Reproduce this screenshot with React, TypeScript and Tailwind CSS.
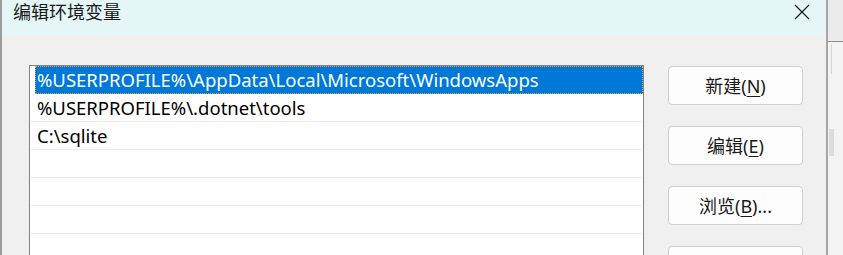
import React from 'react';

const FONT = "font-['Noto_Sans','Noto_Sans_CJK_SC',sans-serif]";

const PATHS = [
  '%USERPROFILE%\\AppData\\Local\\Microsoft\\WindowsApps',
  '%USERPROFILE%\\.dotnet\\tools',
  'C:\\sqlite',
  '',
  '',
  '',
];

function DialogButton({ label, hotkey, suffix = '' }: { label?: string; hotkey?: string; suffix?: string }) {
  return (
    <button className="shrink-0 h-[39px] w-[135px] rounded-[4px] border border-[#d0d0d0] bg-[#fdfdfd] text-[18px] text-[#1a1a1a] flex items-center justify-center">
      {label && (
        <span className="leading-none">
          {label}(<span className="underline underline-offset-[3px]">{hotkey}</span>){suffix}
        </span>
      )}
    </button>
  );
}

export default function App() {
  return (
    <div className={`${FONT} w-[843px] h-[255px] flex overflow-hidden bg-[#f0f0f0]`}>
      {/* window behind, left edge */}
      <div className="w-[2px] h-full bg-[#9c9c9c]" />

      {/* dialog */}
      <div className="w-[824px] h-full flex flex-col overflow-hidden">
        {/* title bar */}
        <div className="shrink-0 h-[35px] bg-[#e4f6f6] flex items-start justify-between pl-[11px] pr-[16px]">
          <span className="text-[18px] leading-[20px] pt-[2px] text-[#1a1a1a]">编辑环境变量</span>
          <svg width="16" height="16" viewBox="0 0 16 16" className="mt-[4px]">
            <path d="M1 1L15 15M15 1L1 15" stroke="#1a1a1a" strokeWidth="1.2" fill="none" />
          </svg>
        </div>

        {/* body */}
        <div className="flex-1 flex pt-[30px] pl-[27px] pr-[23px] gap-[24px] overflow-hidden">
          {/* path list */}
          <div className="shrink-0 w-[615px] h-[260px] border border-[#838383] bg-white">
            {PATHS.map((p, i) =>
              i === 0 ? (
                <div key={i} className="h-[28px] ml-[5px] bg-[#0078d7] border border-dotted border-[#e8a04a] flex items-center pl-[1px] text-[18.5px] text-white whitespace-nowrap">
                  {p}
                </div>
              ) : (
                <div key={i} className="h-[28px] ml-[1px] mr-[1px] border-b border-[#ececec] flex items-center pl-[6px] text-[18.5px] text-black whitespace-nowrap">
                  {p}
                </div>
              )
            )}
          </div>

          {/* buttons */}
          <div className="flex flex-col gap-[21px] pt-[1px]">
            <DialogButton label="新建" hotkey="N" />
            <DialogButton label="编辑" hotkey="E" />
            <DialogButton label="浏览" hotkey="B" suffix="..." />
            <DialogButton />
          </div>
        </div>
      </div>

      {/* dialog edge + window behind, right side */}
      <div className="w-[2px] h-full bg-[#a6a6a6]" />
      <div className="flex-1 h-full flex flex-col bg-[#f3f3f3]">
        <div className="h-[42px] border-b border-[#8a8a8a] bg-[#ececec]" />
        <div className="flex-1 flex">
          <div className="w-[4px] ml-[1px]">
            <div className="h-[30px] mt-[2px] w-[1px] ml-[2px] bg-[#d5d5d5]" />
            <div className="h-[27px] mt-[55px] w-[5px] bg-[#dcdcdc]" />
          </div>
        </div>
      </div>
    </div>
  );
}
